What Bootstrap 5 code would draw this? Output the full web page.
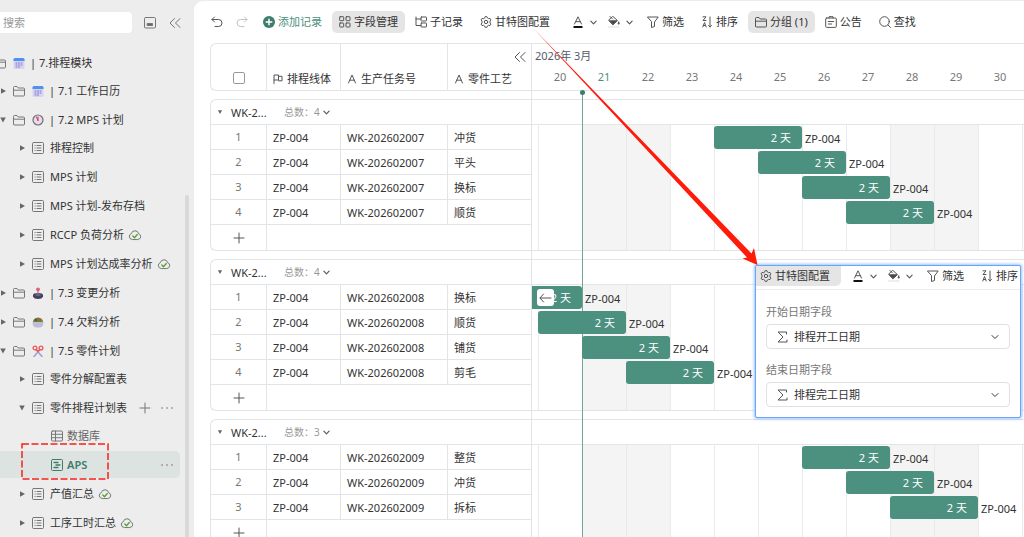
<!DOCTYPE html>
<html lang="zh-CN">
<head>
<meta charset="utf-8">
<meta name="viewport" content="width=device-width, initial-scale=1">
<title>APS 甘特图</title>
<link href="https://cdn.jsdelivr.net/npm/bootstrap@5.3.0/dist/css/bootstrap.min.css" rel="stylesheet">
<style>
:root { --line: #e3e4e5; --green: #4c9080; --deep: #3c7d6c; }
body { font-family: "Noto Sans", "Noto Sans CJK SC", sans-serif; font-size: 11px; line-height: 16px; color: #333; background: #ededed; }
.ico { width: 12px; height: 12px; flex: none; fill: none; stroke: #555; stroke-width: 1; stroke-linecap: round; stroke-linejoin: round; }
.ico-sm { width: 7px; height: 7px; }
.ico-md { width: 10px; height: 10px; }
.ico-lg { width: 14px; height: 12px; }
a { color: inherit; text-decoration: none; }
button { color: inherit; }

/* sidebar */
.side { width: 194px; flex: none; }
.side .ico { stroke: #777; }
.side .emoji { stroke: none; }
.search-box { width: 132px; height: 21px; font-size: 11px; border-radius: 0 4px 4px 0; padding: 0 3px; border: 0; }
.search-box::placeholder { color: #999; }
.side-head { margin-top: 12px; height: 21px; }
.side-head .icon-btn:first-of-type { margin-left: 12px; }
.side-head .icon-btn:last-of-type { margin-left: 13px; }
.icon-btn { border: 0; background: none; padding: 0; display: flex; align-items: center; }
.tree { margin-top: 15px; }
.tree ul { margin-top: -1px; }
.node { height: 29px; display: flex; align-items: center; white-space: nowrap; position: relative; margin-right: 14px; }
.node a { display: flex; align-items: center; }
.fold { width: 8px; height: 8px; margin-right: 6px; flex: none; fill: #666; }
.lv0 { margin-left: -20px; }
.lv1 { margin-left: -1px; }
.lv2 { margin-left: 18px; }
.lv3 { padding-left: 51px; color: #666; }
.emoji { margin: 0 5px 0 7px; }
.lv2 a > .ico:first-child { margin-right: 6px; }
.lv3 a > .ico:first-child { margin-right: 4px; }
.cloud { margin-left: 4px; }
.active-node { color: var(--deep); font-weight: 600; }
.active-node::before { content: ""; position: absolute; inset: 1px 0; background: #dde3e1; border-radius: 0 5px 5px 0; }
.active-node > * { position: relative; }
.active-node a > .ico { stroke: var(--deep); }
.row-more { margin-left: auto; margin-right: 7px; }
.icon-btn + .row-more { margin-left: 10px; }
.marked { position: absolute; left: 21px; top: -7px; }
.scroll-thumb { position: absolute; right: 5px; top: 195px; bottom: 0; width: 4px; border-radius: 2px 2px 0 0; background: #d9d9d9; }

/* toolbar */
.main-pane { margin-top: 1px; border-radius: 9px 0 0 0; background: #fff; min-width: 0; }
.tools { display: flex; align-items: center; gap: 3px; white-space: nowrap; }
.main-pane > .tools { padding: 10px 0 10px 12px; }
.tool { border: 0; background: none; height: 22px; padding: 0 7px; border-radius: 5px; display: flex; align-items: center; gap: 3px; flex: none; }
.tool-on { background: #e5e5e5; }
.tool-bare { padding: 0 5px; }
.tool-drop { padding: 0 4px; gap: 6px; }
.tool-add { color: var(--green); }

/* gantt */
.gantt { padding-left: 16px; position: relative; flex: 1; overflow: hidden; }
.block { border: 1px solid var(--line); border-right: 0; border-radius: 6px 0 0 6px; margin-bottom: 8px; }
.sheet { width: 321px; flex: none; table-layout: fixed; border-collapse: separate; border-spacing: 0; }
.sheet td, .sheet th { padding: 2px 6px 0; height: 25px; border-bottom: 1px solid var(--line); border-right: 1px solid var(--line); font-weight: 400; white-space: nowrap; }
.sheet tr > :last-child { border-right: 0; }
.sheet tr:last-child > * { border-bottom: 0; }
.sheet td:first-child { text-align: center; color: #777; padding: 0 6px; }
.sheet thead th { height: 46px; vertical-align: bottom; padding-bottom: 3px; }
.c-no { width: 56px; } .c-line { width: 74px; } .c-task { width: 107px; } .c-part { width: 84px; }
.sheet .form-check-input { width: 12px; height: 12px; margin: 0 0 3px; border-color: #999; border-radius: 2px; display: block; }
.group-head { height: 25px; border-bottom: 1px solid var(--line); display: flex; align-items: center; padding-left: 6px; }
.group-head .fold { width: 6px; height: 6px; }
.group-name { width: 53px; margin-left: 8px; padding-top: 2px; }
.total { font-size: 10px; color: #999; display: flex; align-items: center; gap: 3px; }
.split-line { position: absolute; left: 337px; top: 0; bottom: 0; width: 1px; background: var(--line); }
.today-line { position: absolute; left: 388px; top: 50px; bottom: 0; width: 1px; background: #6fa696; }
.today-line::before { content: ""; position: absolute; left: -2px; top: -3px; width: 5px; height: 5px; border-radius: 50%; background: var(--deep); }
.scale { color: #555b66; padding: 4px 0 0 3px; min-width: 0; }
.days { display: flex; margin: 5px 0 0 3px; color: #777; }
.days span { width: 44px; flex: none; text-align: center; }
.days .today { color: var(--green); }
.chart { display: grid; grid-template-columns: 6px repeat(12, 44px); grid-auto-rows: 25px; flex: 1; min-width: 0; overflow: hidden; }
.day { border-left: 1px solid #ebebec; grid-row: 1 / span 5; }
.day.off { background: #f4f4f4; border-color: #e9e9ea; }
.short .day { grid-row-end: span 4; }
.bar { background: var(--green); color: #fff; border-radius: 3px; margin: 1px 0; display: flex; align-items: center; justify-content: flex-end; padding-right: 11px; z-index: 2; position: relative; }
.bar-cut { border-radius: 0 3px 3px 0; margin-left: -1px; grid-column-start: 1; }
.jump { position: absolute; left: 6px; top: 3px; width: 17px; height: 17px; border: 0; border-radius: 3px; background: #fff; padding: 0 2px; display: flex; align-items: center; }
.tag { z-index: 2; padding: 5px 0 0 3px; white-space: nowrap; line-height: 17px; }
.two { grid-column-end: span 2; }
.d1 { grid-column-start: 2; } .d2 { grid-column-start: 3; } .d3 { grid-column-start: 4; } .d4 { grid-column-start: 5; } .d5 { grid-column-start: 6; } .d6 { grid-column-start: 7; }
.d7 { grid-column-start: 8; } .d8 { grid-column-start: 9; } .d9 { grid-column-start: 10; } .d10 { grid-column-start: 11; } .d11 { grid-column-start: 12; } .d12 { grid-column-start: 13; }
.r1 { grid-row: 1; } .r2 { grid-row: 2; } .r3 { grid-row: 3; } .r4 { grid-row: 4; }

/* settings panel laid over the chart */
.config { position: absolute; left: 561px; top: 264px; width: 266px; border: 1px solid #6ba4f8; box-shadow: 0 0 3px 1px #9cc4ff; background: #fff; z-index: 4; border-radius: 2px; overflow: hidden; }
.config .tools { border-bottom: 1px solid #ececec; padding-bottom: 3px; }
.config .tool { height: 20px; }
.config .tool:first-child { padding: 0 11px 0 4px; border-radius: 0 0 5px 0; }
.config form { padding: 14px 10px 10px; }
.config label { color: #777; display: block; margin-bottom: 4px; }
.field { position: relative; margin-bottom: 13px; }
.field:last-child { margin-bottom: 0; }
.field .form-select { height: 25px; font-size: 11px; line-height: 16px; padding: 0 24px 0 27px; border-color: #e0e0e0; border-radius: 4px; color: #333; background-size: 8px 8px; background-position: right 10px center; }
.field .ico { position: absolute; left: 10px; bottom: 6px; }
.pointer { position: absolute; left: 336px; top: 27px; width: 230px; height: 240px; z-index: 5; pointer-events: none; }
</style>
</head>
<body>
<svg class="d-none" aria-hidden="true">
  <symbol id="chev" viewBox="0 0 8 8"><path d="M1 2.500 4 5.500 7 2.500" stroke-width="1.300"/></symbol>
  <symbol id="dbl" viewBox="0 0 12 12"><path d="M5.500 1.500 1 6l4.500 4.500M11 1.500 6.500 6l4.500 4.500"/></symbol>
  <symbol id="folder" viewBox="0 0 12 12"><path d="M.5 10V2.500q0-1 1-1H4l1.200 1.500h5.300q1 0 1 1V10q0 1-1 1h-9q-1 0-1-1zM.5 5.200h11"/></symbol>
  <symbol id="sheet" viewBox="0 0 12 12"><rect x=".5" y=".5" width="11" height="11" rx="1"/><path d="M3 3.500h.2M3 6h.2M3 8.500h.2M5 3.500h4M5 6h4M5 8.500h4"/></symbol>
  <symbol id="grid" viewBox="0 0 12 12"><rect x=".5" y="1" width="11" height="10" rx="1"/><path d="M.5 4.300h11M.5 7.700h11M4.500 1v10"/></symbol>
  <symbol id="aps" viewBox="0 0 12 12"><rect x=".5" y=".5" width="11" height="11" rx="1"/><path d="M3 3.500h4M5 6h4M3 8.500h4" stroke-width="1.300"/></symbol>
  <symbol id="cloud" viewBox="0 0 14 12"><path d="M4 10.500a3 3 0 0 1-.7-5.800 3.800 3.800 0 0 1 7.400 0 3 3 0 0 1-.5 5.800z"/><path d="M4.800 7 6.500 8.700 9.300 5.500" stroke="#4fa52c" stroke-width="1.300"/></symbol>
  <symbol id="dots" viewBox="0 0 12 12"><path d="M1 6h.1M6 6h.1M11 6h.1" stroke-width="1.600"/></symbol>
  <symbol id="plus" viewBox="0 0 12 12"><path d="M6 1v10M1 6h10"/></symbol>
  <symbol id="right" viewBox="0 0 8 8"><path d="M2 1.200 7 4 2 6.800z"/></symbol>
  <symbol id="down" viewBox="0 0 8 8"><path d="M1.200 1.500h5.600L4 6.500z"/></symbol>
  <symbol id="cal" viewBox="0 0 12 12"><rect x=".5" y="1" width="11" height="11" rx="1.500" fill="#d9d3f3"/><path d="M.5 4V2.500Q.5 1 2 1h8q1.500 0 1.500 1.500V4z" fill="#4b93ee"/><path d="M3 6h1M5.500 6h1M8 6h1M3 8h1M5.500 8h1M8 8h1M3 10h1M5.500 10h1" stroke="#8178c7"/></symbol>
  <symbol id="clock" viewBox="0 0 12 12"><circle cx="6" cy="6" r="5" fill="#e4dce9" stroke="#756d7e" stroke-width="1.200"/><path d="M6 6.500 4.500 3M6 6.500V3" stroke="#d6335b"/></symbol>
  <symbol id="joy" viewBox="0 0 12 12"><path d="M1 8q0-2 5-2t5 2v1.500Q10 12 6 12T1 9.500z" fill="#46405f"/><path d="M6 3v5" stroke="#8b8498" stroke-width="1.300"/><ellipse cx="6" cy="8" rx="3" ry="1" fill="#6c6690"/><circle cx="6" cy="2.300" r="1.900" fill="#ed5b70"/></symbol>
  <symbol id="salad" viewBox="0 0 12 12"><path d="M1 6q0-4 5-4.500Q11 2 11 6z" fill="#5d8a36"/><circle cx="4" cy="4" r="1.300" fill="#8b4544"/><circle cx="7.500" cy="3.500" r="1.200" fill="#d94b3f"/><path d="M.5 6h11q0 5-3.500 5.500H4Q.5 11 .5 6z" fill="#c4bbd6"/></symbol>
  <symbol id="scissors" viewBox="0 0 12 12"><path d="M4 4.500 10 11.500M8 4.500 2 11.500" stroke="#a99bc1" stroke-width="1.500"/><g fill="none" stroke="#ee5658" stroke-width="1.300"><circle cx="3" cy="3" r="1.900"/><circle cx="9" cy="3" r="1.900"/><path d="M4.200 4.600 6 6.500 7.800 4.600"/></g></symbol>
  <symbol id="gear" viewBox="0 0 12 12"><path d="M4.700 1.900 5.200.6h1.600l.5 1.300 1.300.8 1.400-.3.900 1.500-.9 1.100v2l.9 1.100-.9 1.500-1.400-.3-1.300.8-.5 1.300H5.200l-.5-1.300-1.300-.8-1.400.3-.9-1.500L2 7V5l-.9-1.100L2 2.400l1.400.3z"/><circle cx="6" cy="6" r="1.700"/></symbol>
  <symbol id="color" viewBox="0 0 12 12"><path d="M2.500 8 6 .8l3.500 7.200M3.700 5.700h4.600"/><path d="M1.500 10.900h9" stroke="#111" stroke-width="2" stroke-linecap="butt"/></symbol>
  <symbol id="bucket" viewBox="0 0 12 12"><path d="M2 .5 4.500 3M5 .5 9.300 4.500 5 8.500.9 4.500z"/><path d="M1.500 4.800h7.700L5 8.500z" fill="#444"/><path d="M10.700 6q1.200 2.200 0 2.300-1.200-.1 0-2.300" fill="#444"/><path d="M1 11h9.500" stroke="#eee" stroke-width="2"/></symbol>
  <symbol id="funnel" viewBox="0 0 12 12"><path d="M.8 1h10.400L7.500 6v4.500l-3 1V6z"/></symbol>
  <symbol id="sort" viewBox="0 0 12 12"><path d="M2 .8h3L2 4.500h3M1.800 11 3.500 6.500 5.200 11M2.400 9.500h2.200M9 1v10M7.500 9.500 9 11l1.500-1.500"/></symbol>
  <symbol id="letter-a" viewBox="0 0 10 10"><path d="M1.500 9 5 1l3.500 8M2.800 6.200h4.400"/></symbol>
  <symbol id="sigma" viewBox="0 0 12 12"><path d="M10.500 3V1H2l5 5-5 5h9V9"/></symbol>
</svg>

<div class="d-flex vh-100 overflow-hidden">
  <nav class="side position-relative overflow-hidden" aria-label="目录">
    <div class="side-head d-flex align-items-center">
      <input class="search-box" type="search" placeholder="搜索" aria-label="搜索">
      <button class="icon-btn" aria-label="面板"><svg class="ico" viewBox="0 0 12 12"><rect x=".5" y=".5" width="11" height="10.500" rx="1"/><path d="M3.500 6.500h5v2h-5z" fill="#666"/></svg></button>
      <button class="icon-btn" aria-label="收起"><svg class="ico"><use href="#dbl"/></svg></button>
    </div>
    <ul class="tree list-unstyled mb-0">
      <li><div class="node lv0"><svg class="fold"><use href="#down"/></svg><a href="#"><svg class="ico"><use href="#folder"/></svg><svg class="ico emoji"><use href="#cal"/></svg>| 7.排程模块</a></div>
      <ul class="list-unstyled">
        <li><div class="node lv1"><svg class="fold"><use href="#right"/></svg><a href="#"><svg class="ico"><use href="#folder"/></svg><svg class="ico emoji"><use href="#cal"/></svg>| 7.1 工作日历</a></div></li>
        <li><div class="node lv1"><svg class="fold"><use href="#down"/></svg><a href="#"><svg class="ico"><use href="#folder"/></svg><svg class="ico emoji"><use href="#clock"/></svg>| 7.2 MPS 计划</a></div>
        <ul class="list-unstyled">
          <li><div class="node lv2"><svg class="fold"><use href="#right"/></svg><a href="#"><svg class="ico"><use href="#sheet"/></svg>排程控制</a></div></li>
          <li><div class="node lv2"><svg class="fold"><use href="#right"/></svg><a href="#"><svg class="ico"><use href="#sheet"/></svg>MPS 计划</a></div></li>
          <li><div class="node lv2"><svg class="fold"><use href="#right"/></svg><a href="#"><svg class="ico"><use href="#sheet"/></svg>MPS 计划-发布存档</a></div></li>
          <li><div class="node lv2"><svg class="fold"><use href="#right"/></svg><a href="#"><svg class="ico"><use href="#sheet"/></svg>RCCP 负荷分析<svg class="ico ico-lg cloud"><use href="#cloud"/></svg></a></div></li>
          <li><div class="node lv2"><svg class="fold"><use href="#right"/></svg><a href="#"><svg class="ico"><use href="#sheet"/></svg>MPS 计划达成率分析<svg class="ico ico-lg cloud"><use href="#cloud"/></svg></a></div></li>
        </ul></li>
        <li><div class="node lv1"><svg class="fold"><use href="#right"/></svg><a href="#"><svg class="ico"><use href="#folder"/></svg><svg class="ico emoji"><use href="#joy"/></svg>| 7.3 变更分析</a></div></li>
        <li><div class="node lv1"><svg class="fold"><use href="#right"/></svg><a href="#"><svg class="ico"><use href="#folder"/></svg><svg class="ico emoji"><use href="#salad"/></svg>| 7.4 欠料分析</a></div></li>
        <li><div class="node lv1"><svg class="fold"><use href="#down"/></svg><a href="#"><svg class="ico"><use href="#folder"/></svg><svg class="ico emoji"><use href="#scissors"/></svg>| 7.5 零件计划</a></div>
        <ul class="list-unstyled">
          <li><div class="node lv2"><svg class="fold"><use href="#right"/></svg><a href="#"><svg class="ico"><use href="#sheet"/></svg>零件分解配置表</a></div></li>
          <li><div class="node lv2"><svg class="fold"><use href="#down"/></svg><a href="#"><svg class="ico"><use href="#sheet"/></svg>零件排程计划表</a>
            <button class="icon-btn ms-auto" aria-label="新建"><svg class="ico"><use href="#plus"/></svg></button><button class="icon-btn row-more" aria-label="更多"><svg class="ico"><use href="#dots"/></svg></button></div>
          <ul class="list-unstyled">
            <li><div class="node lv3"><a href="#"><svg class="ico"><use href="#grid"/></svg>数据库</a></div></li>
            <li class="position-relative"><div class="node lv3 active-node"><a href="#"><svg class="ico"><use href="#aps"/></svg>APS</a><button class="icon-btn row-more" aria-label="更多"><svg class="ico"><use href="#dots"/></svg></button></div>
              <svg class="marked" width="88" height="38" aria-hidden="true"><rect x="1" y="1" width="86" height="35" fill="none" stroke="#f8221a" stroke-width="1.500" stroke-dasharray="7 2.500"/></svg></li>
          </ul></li>
          <li><div class="node lv2"><svg class="fold"><use href="#right"/></svg><a href="#"><svg class="ico"><use href="#sheet"/></svg>产值汇总<svg class="ico ico-lg cloud"><use href="#cloud"/></svg></a></div></li>
          <li><div class="node lv2"><svg class="fold"><use href="#right"/></svg><a href="#"><svg class="ico"><use href="#sheet"/></svg>工序工时汇总<svg class="ico ico-lg cloud"><use href="#cloud"/></svg></a></div></li>
        </ul></li>
      </ul></li>
    </ul>
    <div class="scroll-thumb"></div>
  </nav>

  <main class="main-pane flex-grow-1 d-flex flex-column position-relative overflow-hidden">
    <div class="tools" role="toolbar" aria-label="工具栏">
      <button class="tool tool-bare" aria-label="撤销"><svg class="ico" viewBox="0 0 12 12"><path d="M3.500 1 1 3.500 3.500 6M1 3.500h6.500a3.500 3.500 0 0 1 0 7H4"/></svg></button>
      <button class="tool tool-bare opacity-50" aria-label="重做"><svg class="ico" viewBox="0 0 12 12"><path stroke="#888" d="M8.500 1 11 3.500 8.500 6M11 3.500H4.500a3.500 3.500 0 0 0 0 7H8"/></svg></button>
      <button class="tool tool-add"><svg class="ico" viewBox="0 0 12 12"><circle cx="6" cy="6" r="6" fill="#3c7d6c" stroke="none"/><path d="M6 3.200v5.600M3.200 6h5.600" stroke="#fff" stroke-width="1.500"/></svg>添加记录</button>
      <button class="tool tool-on"><svg class="ico" viewBox="0 0 12 12"><rect x=".7" y=".7" width="4" height="4" rx=".5"/><rect x="7" y=".7" width="4" height="4" rx=".5"/><rect x=".7" y="7" width="4" height="4" rx=".5"/><rect x="7" y="7" width="4" height="4" rx=".5"/></svg>字段管理</button>
      <button class="tool"><svg class="ico" viewBox="0 0 12 12"><path d="M1 1v8.500h5M1 3h5"/><rect x="6" y="1" width="5.500" height="4" rx=".5"/><rect x="6" y="7" width="5.500" height="4" rx=".5"/></svg>子记录</button>
      <button class="tool"><svg class="ico"><use href="#gear"/></svg>甘特图配置</button>
      <button class="tool tool-drop ms-2" aria-label="文字颜色"><svg class="ico"><use href="#color"/></svg><svg class="ico ico-sm"><use href="#chev"/></svg></button>
      <button class="tool tool-drop" aria-label="填充颜色"><svg class="ico"><use href="#bucket"/></svg><svg class="ico ico-sm"><use href="#chev"/></svg></button>
      <button class="tool"><svg class="ico"><use href="#funnel"/></svg>筛选</button>
      <button class="tool"><svg class="ico"><use href="#sort"/></svg>排序</button>
      <button class="tool tool-on"><svg class="ico"><use href="#folder"/></svg>分组 (1)</button>
      <button class="tool"><svg class="ico" viewBox="0 0 12 12"><rect x=".7" y="2" width="10.600" height="9.400" rx="1"/><path d="M4 2V.7h4V2M3.300 5.500h5.400M3.300 8h3.400"/></svg>公告</button>
      <button class="tool"><svg class="ico" viewBox="0 0 12 12"><circle cx="5.500" cy="5.500" r="4.800"/><path d="M9 9l2.500 2.500"/></svg>查找</button>
    </div>

    <section class="gantt">
      <div class="split-line"></div>
      <div class="today-line"></div>
      <div class="block d-flex">
        <table class="sheet">
          <colgroup><col class="c-no"><col class="c-line"><col class="c-task"><col class="c-part"></colgroup>
          <thead><tr>
            <th><div class="d-flex justify-content-center"><input class="form-check-input" type="checkbox" aria-label="全选"></div></th>
            <th><div class="d-flex align-items-center gap-1"><svg class="ico ico-md" viewBox="0 0 10 10"><path d="M1 9.500V1h4.500v5H1M5.500 2.300H9v4.500H5.500"/></svg>排程线体</div></th>
            <th><div class="d-flex align-items-center gap-1"><svg class="ico ico-md"><use href="#letter-a"/></svg>生产任务号</div></th>
            <th><button class="icon-btn ms-auto mb-2" aria-label="收起表格"><svg class="ico"><use href="#dbl"/></svg></button><div class="d-flex align-items-center gap-1"><svg class="ico ico-md"><use href="#letter-a"/></svg>零件工艺</div></th>
          </tr></thead>
        </table>
        <div class="scale flex-grow-1 overflow-hidden">
          <div>2026年 3月</div>
          <div class="days"><span>20</span><span class="today">21</span><span>22</span><span>23</span><span>24</span><span>25</span><span>26</span><span>27</span><span>28</span><span>29</span><span>30</span></div>
        </div>
      </div>

      <div class="block">
        <div class="group-head"><svg class="fold m-0"><use href="#down"/></svg><span class="group-name">WK-2...</span><span class="total">总数：4 <svg class="ico ico-sm"><use href="#chev"/></svg></span></div>
        <div class="d-flex">
          <table class="sheet">
            <colgroup><col class="c-no"><col class="c-line"><col class="c-task"><col class="c-part"></colgroup>
            <tbody>
              <tr><td>1</td><td>ZP-004</td><td>WK-202602007</td><td>冲货</td></tr>
              <tr><td>2</td><td>ZP-004</td><td>WK-202602007</td><td>平头</td></tr>
              <tr><td>3</td><td>ZP-004</td><td>WK-202602007</td><td>换标</td></tr>
              <tr><td>4</td><td>ZP-004</td><td>WK-202602007</td><td>顺货</td></tr>
              <tr><td><button class="icon-btn mx-auto" aria-label="添加"><svg class="ico"><use href="#plus"/></svg></button></td><td colspan="3"></td></tr>
            </tbody>
          </table>
          <div class="chart">
            <div class="day d1"></div><div class="day d2 off"></div><div class="day d3 off"></div><div class="day d4"></div><div class="day d5"></div><div class="day d6"></div><div class="day d7"></div><div class="day d8"></div><div class="day d9 off"></div><div class="day d10 off"></div><div class="day d11"></div><div class="day d12"></div>
            <div class="bar r1 d5 two">2 天</div><div class="tag r1 d7">ZP-004</div>
            <div class="bar r2 d6 two">2 天</div><div class="tag r2 d8">ZP-004</div>
            <div class="bar r3 d7 two">2 天</div><div class="tag r3 d9">ZP-004</div>
            <div class="bar r4 d8 two">2 天</div><div class="tag r4 d10">ZP-004</div>
          </div>
        </div>
      </div>

      <div class="block">
        <div class="group-head"><svg class="fold m-0"><use href="#down"/></svg><span class="group-name">WK-2...</span><span class="total">总数：4 <svg class="ico ico-sm"><use href="#chev"/></svg></span></div>
        <div class="d-flex">
          <table class="sheet">
            <colgroup><col class="c-no"><col class="c-line"><col class="c-task"><col class="c-part"></colgroup>
            <tbody>
              <tr><td>1</td><td>ZP-004</td><td>WK-202602008</td><td>换标</td></tr>
              <tr><td>2</td><td>ZP-004</td><td>WK-202602008</td><td>顺货</td></tr>
              <tr><td>3</td><td>ZP-004</td><td>WK-202602008</td><td>铺货</td></tr>
              <tr><td>4</td><td>ZP-004</td><td>WK-202602008</td><td>剪毛</td></tr>
              <tr><td><button class="icon-btn mx-auto" aria-label="添加"><svg class="ico"><use href="#plus"/></svg></button></td><td colspan="3"></td></tr>
            </tbody>
          </table>
          <div class="chart">
            <div class="day d1"></div><div class="day d2 off"></div><div class="day d3 off"></div><div class="day d4"></div><div class="day d5"></div><div class="day d6"></div><div class="day d7"></div><div class="day d8"></div><div class="day d9 off"></div><div class="day d10 off"></div><div class="day d11"></div><div class="day d12"></div>
            <div class="bar bar-cut r1 two">2 天<button class="jump" aria-label="跳到开始"><svg class="ico w-100" viewBox="0 0 12 12"><path d="M4 2 .5 6 4 10M.5 6h11"/></svg></button></div><div class="tag r1 d2">ZP-004</div>
            <div class="bar r2 d1 two">2 天</div><div class="tag r2 d3">ZP-004</div>
            <div class="bar r3 d2 two">2 天</div><div class="tag r3 d4">ZP-004</div>
            <div class="bar r4 d3 two">2 天</div><div class="tag r4 d5">ZP-004</div>
          </div>
        </div>
      </div>

      <div class="block">
        <div class="group-head"><svg class="fold m-0"><use href="#down"/></svg><span class="group-name">WK-2...</span><span class="total">总数：3 <svg class="ico ico-sm"><use href="#chev"/></svg></span></div>
        <div class="d-flex">
          <table class="sheet">
            <colgroup><col class="c-no"><col class="c-line"><col class="c-task"><col class="c-part"></colgroup>
            <tbody>
              <tr><td>1</td><td>ZP-004</td><td>WK-202602009</td><td>整货</td></tr>
              <tr><td>2</td><td>ZP-004</td><td>WK-202602009</td><td>冲货</td></tr>
              <tr><td>3</td><td>ZP-004</td><td>WK-202602009</td><td>拆标</td></tr>
              <tr><td><button class="icon-btn mx-auto" aria-label="添加"><svg class="ico"><use href="#plus"/></svg></button></td><td colspan="3"></td></tr>
            </tbody>
          </table>
          <div class="chart short">
            <div class="day d1"></div><div class="day d2 off"></div><div class="day d3 off"></div><div class="day d4"></div><div class="day d5"></div><div class="day d6"></div><div class="day d7"></div><div class="day d8"></div><div class="day d9 off"></div><div class="day d10 off"></div><div class="day d11"></div><div class="day d12"></div>
            <div class="bar r1 d7 two">2 天</div><div class="tag r1 d9">ZP-004</div>
            <div class="bar r2 d8 two">2 天</div><div class="tag r2 d10">ZP-004</div>
            <div class="bar r3 d9 two">2 天</div><div class="tag r3 d11">ZP-004</div>
          </div>
        </div>
      </div>
    </section>

    <div class="config">
      <div class="tools">
        <button class="tool tool-on"><svg class="ico"><use href="#gear"/></svg>甘特图配置</button>
        <button class="tool tool-drop ms-1" aria-label="文字颜色"><svg class="ico"><use href="#color"/></svg><svg class="ico ico-sm"><use href="#chev"/></svg></button>
        <button class="tool tool-drop" aria-label="填充颜色"><svg class="ico"><use href="#bucket"/></svg><svg class="ico ico-sm"><use href="#chev"/></svg></button>
        <button class="tool"><svg class="ico"><use href="#funnel"/></svg>筛选</button>
        <button class="tool"><svg class="ico"><use href="#sort"/></svg>排序</button>
      </div>
      <form>
        <div class="field"><label for="start">开始日期字段</label><select class="form-select" id="start"><option>排程开工日期</option></select><svg class="ico"><use href="#sigma"/></svg></div>
        <div class="field"><label for="end">结束日期字段</label><select class="form-select" id="end"><option>排程完工日期</option></select><svg class="ico"><use href="#sigma"/></svg></div>
      </form>
    </div>
    <svg class="pointer" viewBox="530 28 230 240" aria-hidden="true"><path fill="#ff1a0a" d="M533 28 751.500 253.500 754 248 757.500 265 742.500 258.500 747 257.500z"/></svg>
  </main>
</div>
<script src="https://cdn.jsdelivr.net/npm/bootstrap@5.3.0/dist/js/bootstrap.bundle.min.js"></script>
</body>
</html>
